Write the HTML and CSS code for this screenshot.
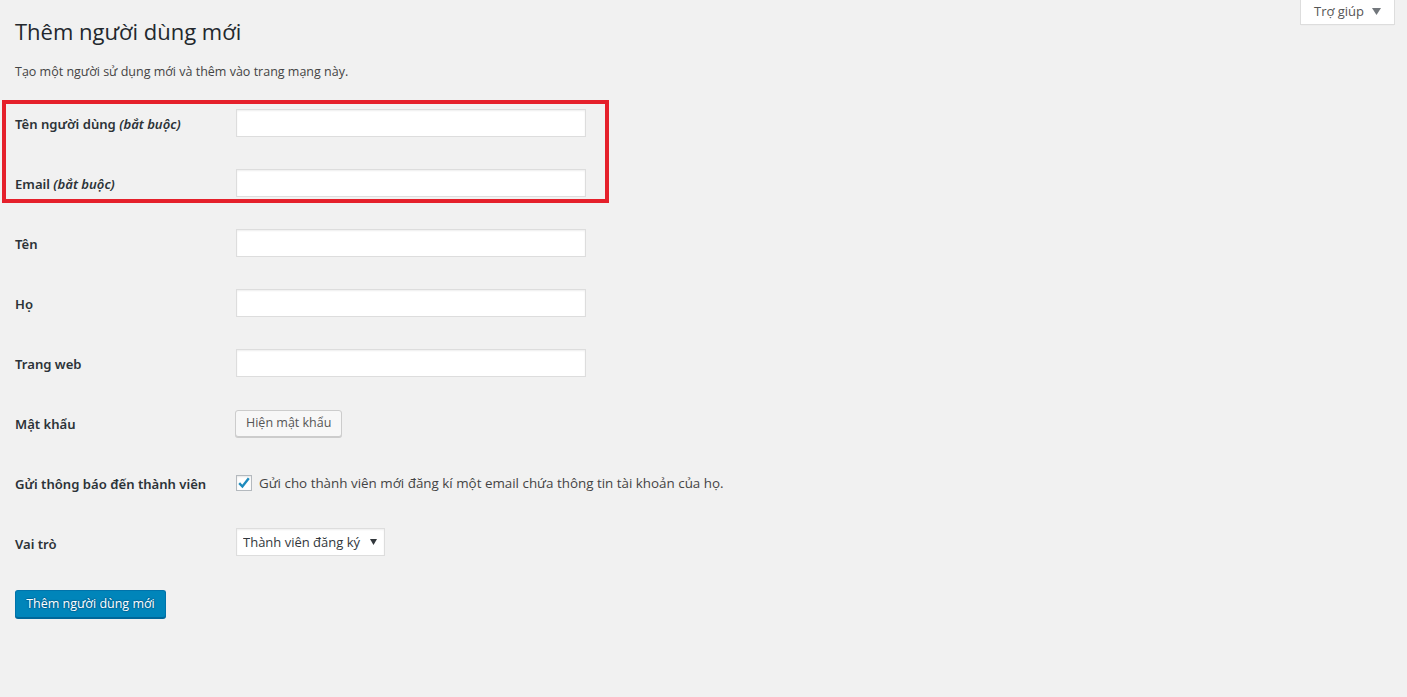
FILE: index.html
```html
<!DOCTYPE html>
<html lang="vi">
<head>
<meta charset="utf-8">
<title>Thêm người dùng mới</title>
<link rel="stylesheet" href="styles.css">
</head>
<body>
<div class="help-bar">
  <button class="help-tab" type="button">Trợ giúp <svg class="tri" width="9" height="7" viewBox="0 0 9 7"><path d="M0 0h9L4.5 7z" fill="#72777c"/></svg></button>
</div>
<main class="wrap">
  <h1 class="title">Thêm người dùng mới</h1>
  <p class="intro">Tạo một người sử dụng mới và thêm vào trang mạng này.</p>
  <form class="form">
    <div class="required-group">
      <div class="row">
        <label class="th" for="user_login">Tên người dùng <em>(bắt buộc)</em></label>
        <input class="text" id="user_login" type="text">
      </div>
      <div class="row">
        <label class="th" for="email">Email <em>(bắt buộc)</em></label>
        <input class="text" id="email" type="text">
      </div>
    </div>
    <div class="row">
      <label class="th" for="first_name">Tên</label>
      <input class="text" id="first_name" type="text">
    </div>
    <div class="row">
      <label class="th" for="last_name">Họ</label>
      <input class="text" id="last_name" type="text">
    </div>
    <div class="row">
      <label class="th" for="url">Trang web</label>
      <input class="text" id="url" type="text">
    </div>
    <div class="row">
      <span class="th">Mật khẩu</span>
      <button class="btn" type="button">Hiện mật khẩu</button>
    </div>
    <div class="row">
      <span class="th">Gửi thông báo đến thành viên</span>
      <label class="check-label">
        <span class="checkbox"><svg width="14" height="14" viewBox="0 0 14 14"><path d="M2.2 7.2l3.2 3.3 6.4-8.2" fill="none" stroke="#1e8cbe" stroke-width="2.4"/></svg></span>
        Gửi cho thành viên mới đăng kí một email chứa thông tin tài khoản của họ.
      </label>
    </div>
    <div class="row">
      <label class="th" for="role">Vai trò</label>
      <span class="select-wrap">
        <select class="select" id="role"><option>Thành viên đăng ký</option></select>
        <svg class="select-arrow" width="7" height="6" viewBox="0 0 7 6"><path d="M0 0h7L3.5 6z" fill="#32373c"/></svg>
      </span>
    </div>
    <div class="submit-row">
      <button class="btn-primary" type="button">Thêm người dùng mới</button>
    </div>
  </form>
</main>
</body>
</html>
```

FILE: styles.css
```css
html, body {
  margin: 0;
  padding: 0;
  background: #f1f1f1;
}
body {
  font-family: "Open Sans", "Noto Sans", "Liberation Sans", sans-serif;
  font-size: 13px;
  color: #444;
  height: 697px;
  overflow: hidden;
}
.help-bar {
  float: right;
  margin-right: 12px;
}
.help-tab {
  display: flex;
  align-items: center;
  gap: 8px;
  width: 95px;
  height: 25px;
  justify-content: center;
  padding: 0 0 2px 0;
  background: #fff;
  border: 1px solid #ddd;
  border-top: none;
  box-shadow: 0 1px 1px -1px rgba(0,0,0,.1);
  font-family: inherit;
  font-size: 13px;
  color: #555;
}
.tri { margin-top: 1px; }
.wrap {
  padding: 0 15px;
}
.title {
  margin: 0;
  padding-top: 16px;
  font-size: 22px;
  font-weight: 400;
  line-height: 30px;
  color: #23282d;
}
.intro {
  margin: 16px 0 0;
  line-height: 20px;
  font-size: 12.5px;
  color: #444;
}
.form {
  margin-top: 11px;
}
.required-group {
  position: relative;
}
.required-group::after {
  content: "";
  position: absolute;
  left: -13px;
  top: 7px;
  width: 607px;
  height: 103px;
  box-sizing: border-box;
  border: 4px solid #e5202b;
  pointer-events: none;
}
.row {
  display: flex;
  align-items: center;
  height: 60px;
}
.th {
  width: 221px;
  flex: none;
  font-family: "Noto Sans", "Open Sans", sans-serif;
  font-weight: 600;
  font-size: 13.1px;
  color: #2c3338;
  padding-top: 1px;
}
.th em {
  font-weight: 600;
  font-style: italic;
}
.text {
  box-sizing: border-box;
  width: 350px;
  height: 28px;
  margin: 0;
  border: 1px solid #ddd;
  background: #fff;
  box-shadow: inset 0 1px 2px rgba(0,0,0,.07);
  font-family: inherit;
  font-size: 13px;
  padding: 3px 5px;
}
.btn {
  box-sizing: border-box;
  height: 27px;
  margin-left: -1px;
  padding: 0 10px 1px;
  background: #f7f7f7;
  border: 1px solid #ccc;
  border-radius: 3px;
  box-shadow: 0 1px 0 #ccc;
  font-family: inherit;
  font-size: 12.5px;
  color: #555;
}
.check-label {
  display: flex;
  align-items: center;
  gap: 7px;
  font-size: 13.4px;
  color: #444;
}
.checkbox {
  box-sizing: border-box;
  width: 16px;
  height: 16px;
  border: 1px solid #b4b9be;
  background: #fff;
  box-shadow: inset 0 1px 2px rgba(0,0,0,.1);
  display: flex;
  align-items: center;
  justify-content: center;
}
.select-wrap {
  position: relative;
  display: inline-block;
  margin-top: -3px;
}
.select {
  box-sizing: border-box;
  -webkit-appearance: none;
  appearance: none;
  width: 149px;
  height: 28px;
  padding: 0 20px 0 6px;
  border: 1px solid #ddd;
  border-radius: 0;
  background: #fff;
  box-shadow: inset 0 1px 2px rgba(0,0,0,.07);
  font-family: inherit;
  font-size: 13px;
  color: #32373c;
}
.select-arrow {
  position: absolute;
  right: 8px;
  top: 11px;
  pointer-events: none;
}
.submit-row {
  margin-top: 17px;
}
.btn-primary {
  box-sizing: border-box;
  height: 28px;
  width: 151px;
  padding: 0 10px 1px;
  background: #0085ba;
  border: 1px solid #0073aa;
  border-bottom-color: #006799;
  border-radius: 3px;
  box-shadow: 0 1px 0 #006799;
  color: #fff;
  text-shadow: 0 -1px 1px #006799, 1px 0 1px #006799, 0 1px 1px #006799, -1px 0 1px #006799;
  font-family: inherit;
  font-size: 12.5px;
}
```
